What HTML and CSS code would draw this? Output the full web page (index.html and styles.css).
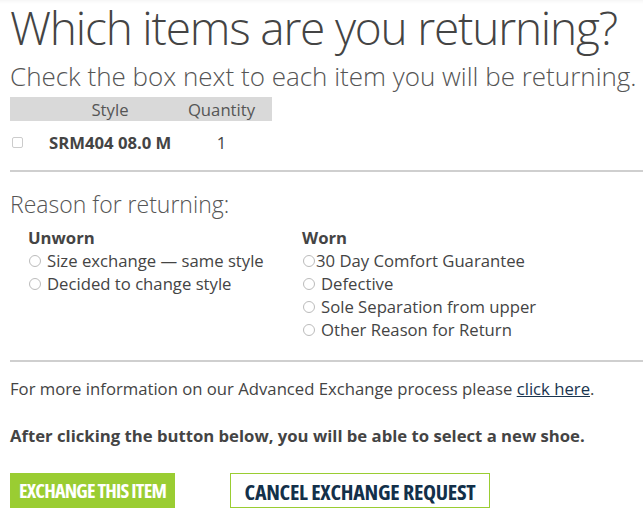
FILE: index.html
```html
<!DOCTYPE html>
<html>
<head>
<meta charset="utf-8">
<link rel="stylesheet" href="styles.css">
</head>
<body>
<div class="page">
  <h1 class="title">Which items are you returning?</h1>
  <p class="subtitle">Check the box next to each item you will be returning.</p>
  <div class="items">
    <div class="items-head">
      <span class="col-check"></span>
      <span class="col-style">Style</span>
      <span class="col-qty">Quantity</span>
    </div>
    <div class="items-row">
      <span class="col-check"><span class="checkbox"></span></span>
      <span class="col-style sku">SRM404 08.0 M</span>
      <span class="col-qty qty">1</span>
    </div>
  </div>
  <hr class="rule">
  <h2 class="reason-title">Reason for returning:</h2>
  <div class="reasons">
    <div class="reason-col">
      <div class="reason-head">Unworn</div>
      <label class="opt"><span class="radio"></span>Size exchange — same style</label>
      <label class="opt"><span class="radio"></span>Decided to change style</label>
    </div>
    <div class="reason-col">
      <div class="reason-head">Worn</div>
      <label class="opt tight"><span class="radio"></span>30 Day Comfort Guarantee</label>
      <label class="opt"><span class="radio"></span>Defective</label>
      <label class="opt"><span class="radio"></span>Sole Separation from upper</label>
      <label class="opt"><span class="radio"></span>Other Reason for Return</label>
    </div>
  </div>
  <hr class="rule rule2">
  <p class="info">For more information on our Advanced Exchange process please <a href="#" class="link">click here</a>.</p>
  <p class="note">After clicking the button below, you will be able to select a new shoe.</p>
  <div class="actions">
    <button class="btn btn-primary">EXCHANGE THIS ITEM</button>
    <button class="btn btn-outline">CANCEL EXCHANGE REQUEST</button>
  </div>
</div>
</body>
</html>
```

FILE: styles.css
```css
html, body {
  margin: 0;
  padding: 0;
  background: #fff;
}
body {
  font-family: "Open Sans", "DejaVu Sans", sans-serif;
  color: #444;
  overflow: hidden;
}
.page {
  padding: 0 0 0 10px;
  box-shadow: inset 0 5px 5px -5px rgba(0,0,0,0.08);
}
.title {
  margin: 0;
  padding-top: 1px;
  font-size: 46px;
  font-weight: 300;
  line-height: 52px;
  letter-spacing: -1.2px;
  color: #444;
  white-space: nowrap;
}
.subtitle {
  margin: 0;
  padding-top: 3px;
  font-size: 26px;
  font-weight: 300;
  line-height: 41px;
  color: #555;
  white-space: nowrap;
}
.items {
  width: 262px;
}
.items-head {
  display: flex;
  background: #d9d9d9;
  height: 24px;
  align-items: center;
  font-size: 16.7px;
  color: #555;
}
.col-check {
  width: 39px;
  flex: none;
}
.col-style {
  width: 122px;
  flex: none;
  text-align: center;
  white-space: nowrap;
}
.col-qty {
  width: 101px;
  flex: none;
  text-align: center;
}
.items-row {
  display: flex;
  align-items: center;
  height: 42px;
}
.checkbox {
  display: block;
  width: 9px;
  height: 9px;
  border: 1px solid #ccc;
  border-radius: 2px;
  margin-left: 2px;
}
.sku {
  font-weight: 700;
  font-size: 16.7px;
  color: #444;
}
.qty {
  font-size: 16.7px;
  color: #444;
}
.rule {
  margin: 7px 0 0 0;
  border: 0;
  height: 2px;
  background: #cfcfcf;
}
.reason-title {
  margin: 0;
  padding-top: 16px;
  font-size: 23px;
  font-weight: 300;
  line-height: 32px;
  color: #555;
}
.reasons {
  display: flex;
  padding-top: 6px;
  padding-left: 18px;
}
.reason-col {
  display: flex;
  flex-direction: column;
}
.reason-col:first-child {
  width: 274px;
}
.reason-head {
  font-weight: 700;
  font-size: 16.7px;
  line-height: 23px;
  color: #444;
}
.opt {
  display: flex;
  align-items: center;
  font-size: 16.7px;
  line-height: 23px;
  color: #444;
}
.radio {
  display: inline-block;
  flex: none;
  width: 10px;
  height: 10px;
  border: 1px solid #bbb;
  border-radius: 50%;
  margin: 0 6px 0 1px;
}
.opt.tight .radio {
  margin-right: 1px;
}
.rule2 {
  margin-top: 19px;
}
.info {
  margin: 0;
  padding-top: 15px;
  font-size: 16.7px;
  line-height: 24px;
  color: #444;
}
.link {
  color: #1a3550;
  text-decoration: underline;
}
.note {
  margin: 0;
  padding-top: 23px;
  font-size: 16.7px;
  font-weight: 700;
  line-height: 24px;
  color: #444;
}
.actions {
  display: flex;
  gap: 55px;
  padding-top: 25px;
}
.btn {
  font-family: "Open Sans", "Liberation Sans Narrow", sans-serif;
  font-stretch: condensed;
  font-weight: 700;
  font-size: 22px;
  height: 35px;
  padding: 0;
  border-radius: 0;
  cursor: pointer;
  letter-spacing: -0.3px;
  white-space: nowrap;
  display: flex;
  align-items: center;
  justify-content: center;
}
.btn-primary {
  background: #9acd32;
  border: 1px solid #9acd32;
  color: #fff;
  width: 165px;
  font-size: 20px;
  letter-spacing: -0.8px;
}
.btn-outline {
  background: #fff;
  border: 1px solid #9acd32;
  color: #13304a;
  width: 260px;
}
```
